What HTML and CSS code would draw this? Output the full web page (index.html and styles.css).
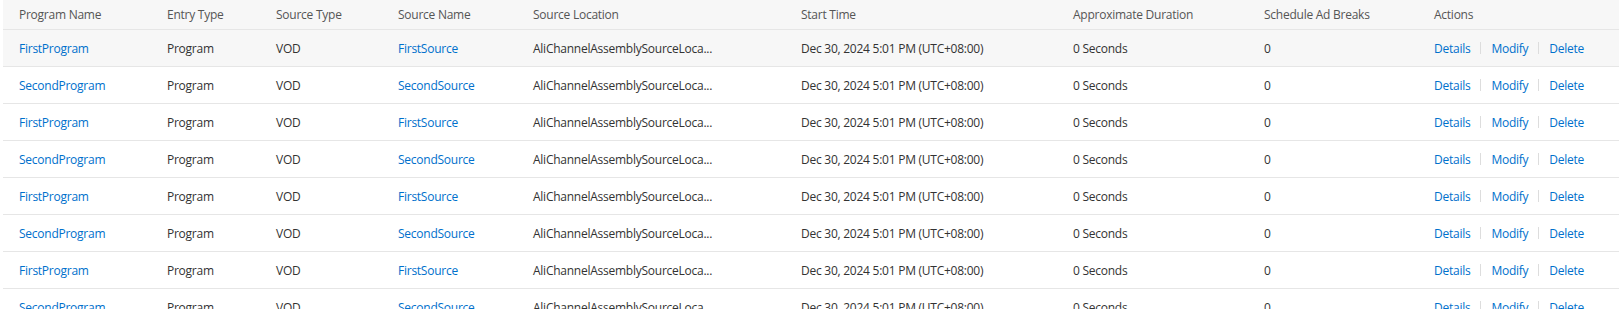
FILE: index.html
```html
<!DOCTYPE html>
<html>
<head>
<meta charset="utf-8">
<link rel="stylesheet" href="styles.css">
</head>
<body>
<div class="table">
  <div class="row head">
    <div class="cell">Program Name</div>
    <div class="cell">Entry Type</div>
    <div class="cell">Source Type</div>
    <div class="cell">Source Name</div>
    <div class="cell">Source Location</div>
    <div class="cell">Start Time</div>
    <div class="cell">Approximate Duration</div>
    <div class="cell">Schedule Ad Breaks</div>
    <div class="cell">Actions</div>
  </div>
  <div class="row hover">
    <div class="cell"><a class="link">FirstProgram</a></div>
    <div class="cell">Program</div>
    <div class="cell">VOD</div>
    <div class="cell"><a class="link">FirstSource</a></div>
    <div class="cell">AliChannelAssemblySourceLoca...</div>
    <div class="cell">Dec 30, 2024 5:01 PM (UTC+08:00)</div>
    <div class="cell">0 Seconds</div>
    <div class="cell">0</div>
    <div class="cell actions"><a class="link">Details</a><span class="sep"></span><a class="link">Modify</a><span class="sep"></span><a class="link">Delete</a></div>
  </div>
  <div class="row">
    <div class="cell"><a class="link">SecondProgram</a></div>
    <div class="cell">Program</div>
    <div class="cell">VOD</div>
    <div class="cell"><a class="link">SecondSource</a></div>
    <div class="cell">AliChannelAssemblySourceLoca...</div>
    <div class="cell">Dec 30, 2024 5:01 PM (UTC+08:00)</div>
    <div class="cell">0 Seconds</div>
    <div class="cell">0</div>
    <div class="cell actions"><a class="link">Details</a><span class="sep"></span><a class="link">Modify</a><span class="sep"></span><a class="link">Delete</a></div>
  </div>
  <div class="row">
    <div class="cell"><a class="link">FirstProgram</a></div>
    <div class="cell">Program</div>
    <div class="cell">VOD</div>
    <div class="cell"><a class="link">FirstSource</a></div>
    <div class="cell">AliChannelAssemblySourceLoca...</div>
    <div class="cell">Dec 30, 2024 5:01 PM (UTC+08:00)</div>
    <div class="cell">0 Seconds</div>
    <div class="cell">0</div>
    <div class="cell actions"><a class="link">Details</a><span class="sep"></span><a class="link">Modify</a><span class="sep"></span><a class="link">Delete</a></div>
  </div>
  <div class="row">
    <div class="cell"><a class="link">SecondProgram</a></div>
    <div class="cell">Program</div>
    <div class="cell">VOD</div>
    <div class="cell"><a class="link">SecondSource</a></div>
    <div class="cell">AliChannelAssemblySourceLoca...</div>
    <div class="cell">Dec 30, 2024 5:01 PM (UTC+08:00)</div>
    <div class="cell">0 Seconds</div>
    <div class="cell">0</div>
    <div class="cell actions"><a class="link">Details</a><span class="sep"></span><a class="link">Modify</a><span class="sep"></span><a class="link">Delete</a></div>
  </div>
  <div class="row">
    <div class="cell"><a class="link">FirstProgram</a></div>
    <div class="cell">Program</div>
    <div class="cell">VOD</div>
    <div class="cell"><a class="link">FirstSource</a></div>
    <div class="cell">AliChannelAssemblySourceLoca...</div>
    <div class="cell">Dec 30, 2024 5:01 PM (UTC+08:00)</div>
    <div class="cell">0 Seconds</div>
    <div class="cell">0</div>
    <div class="cell actions"><a class="link">Details</a><span class="sep"></span><a class="link">Modify</a><span class="sep"></span><a class="link">Delete</a></div>
  </div>
  <div class="row">
    <div class="cell"><a class="link">SecondProgram</a></div>
    <div class="cell">Program</div>
    <div class="cell">VOD</div>
    <div class="cell"><a class="link">SecondSource</a></div>
    <div class="cell">AliChannelAssemblySourceLoca...</div>
    <div class="cell">Dec 30, 2024 5:01 PM (UTC+08:00)</div>
    <div class="cell">0 Seconds</div>
    <div class="cell">0</div>
    <div class="cell actions"><a class="link">Details</a><span class="sep"></span><a class="link">Modify</a><span class="sep"></span><a class="link">Delete</a></div>
  </div>
  <div class="row">
    <div class="cell"><a class="link">FirstProgram</a></div>
    <div class="cell">Program</div>
    <div class="cell">VOD</div>
    <div class="cell"><a class="link">FirstSource</a></div>
    <div class="cell">AliChannelAssemblySourceLoca...</div>
    <div class="cell">Dec 30, 2024 5:01 PM (UTC+08:00)</div>
    <div class="cell">0 Seconds</div>
    <div class="cell">0</div>
    <div class="cell actions"><a class="link">Details</a><span class="sep"></span><a class="link">Modify</a><span class="sep"></span><a class="link">Delete</a></div>
  </div>
  <div class="row">
    <div class="cell"><a class="link">SecondProgram</a></div>
    <div class="cell">Program</div>
    <div class="cell">VOD</div>
    <div class="cell"><a class="link">SecondSource</a></div>
    <div class="cell">AliChannelAssemblySourceLoca...</div>
    <div class="cell">Dec 30, 2024 5:01 PM (UTC+08:00)</div>
    <div class="cell">0 Seconds</div>
    <div class="cell">0</div>
    <div class="cell actions"><a class="link">Details</a><span class="sep"></span><a class="link">Modify</a><span class="sep"></span><a class="link">Delete</a></div>
  </div>
</div>
</body>
</html>
```

FILE: styles.css
```css
html, body {
  margin: 0;
  padding: 0;
  background: #ffffff;
  overflow: hidden;
}
body {
  padding-left: 3px;
  font-family: "Open Sans", "Noto Sans", sans-serif;
  font-size: 12px;
  letter-spacing: -0.25px;
  color: #333333;
}
.table {
  display: flex;
  flex-direction: column;
}
.row {
  display: grid;
  grid-template-columns: 148px 109px 122px 135px 268px 272px 191px 170px 1fr;
  height: 36px;
  border-bottom: 1px solid #e6e6e6;
  align-items: center;
}
.row.head {
  height: 29px;
  background: #f7f7f7;
  color: #555555;
}
.row.hover {
  background: #f7f7f7;
}
.cell {
  padding-left: 16px;
  white-space: nowrap;
  overflow: hidden;
}
.link {
  color: #0070cc;
  text-decoration: none;
  cursor: pointer;
}
.actions {
  display: flex;
  align-items: center;
}
.sep {
  width: 1px;
  height: 12px;
  background: #dddddd;
  margin: 0 10px;
}
```
